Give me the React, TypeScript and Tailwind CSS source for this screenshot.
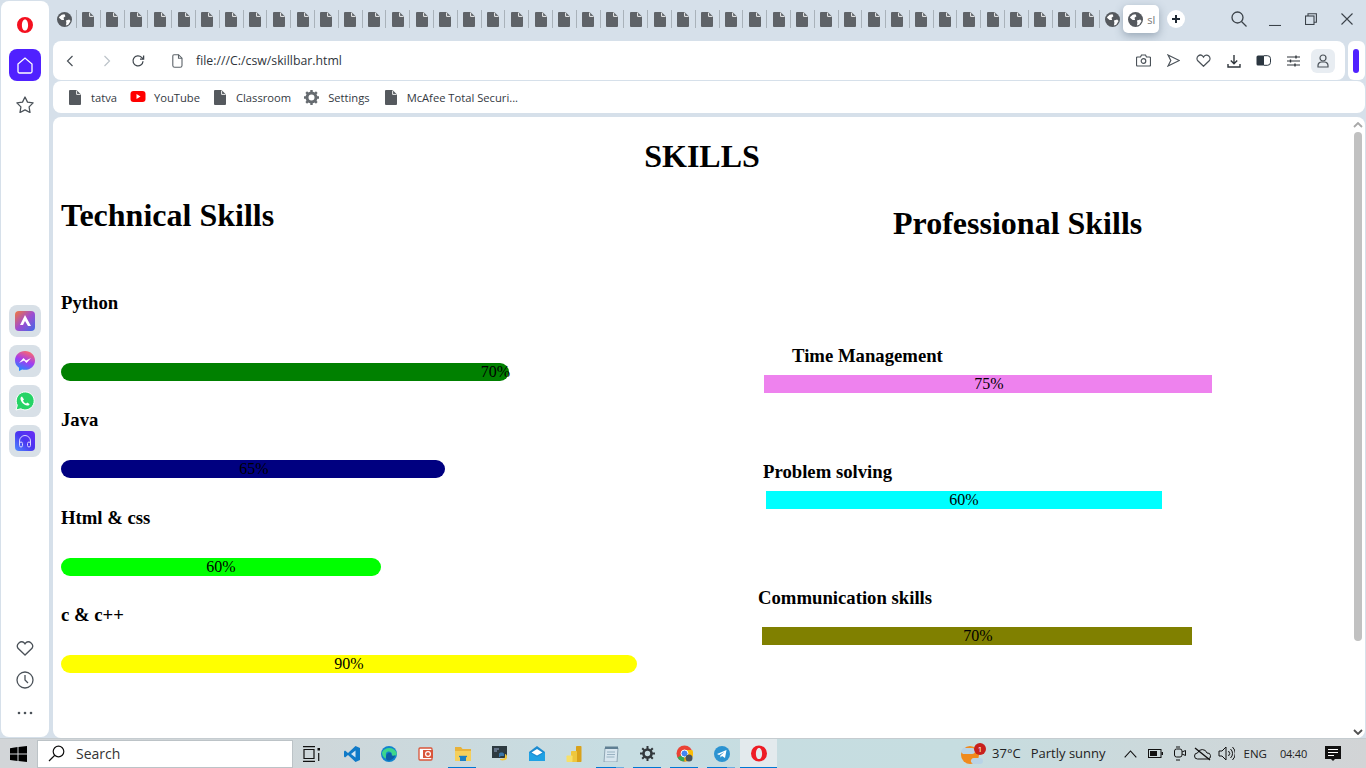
import React from "react";

const UI = { fontFamily: '"Open Sans", "Noto Sans", sans-serif' };
const SERIF = { fontFamily: '"Liberation Serif", serif' };

function FileIcon({ w = 12, h = 15, color = "#5f6368" }: { w?: number; h?: number; color?: string }) {
  return (
    <svg width={w} height={h} viewBox="0 0 12 15" className="shrink-0">
      <path d="M1 0h6.500L12 4.500V14a1 1 0 0 1-1 1H1a1 1 0 0 1-1-1V1a1 1 0 0 1 1-1z" fill={color} />
      <path d="M7.600 0.600V4.400H11.500" fill="none" stroke="#fff" strokeWidth="0.900" />
    </svg>
  );
}

function Globe({ size = 15 }: { size?: number }) {
  return (
    <svg width={size} height={size} viewBox="0 0 16 16" className="shrink-0">
      <circle cx="8" cy="8" r="8" fill="#55595e" />
      <path d="M2 5.500 5 3 8 2.500 9 4.500 7 6 7.500 8.500 5 8.500 3 7z" fill="#fff" />
      <path d="M9.500 9 13 8 14.500 9.500 12 13.500 9.500 14.500 10 11.500z" fill="#fff" />
    </svg>
  );
}

function OperaLogo({ w = 16, h = 16, color = "#f4101f" }: { w?: number; h?: number; color?: string }) {
  return (
    <svg width={w} height={h} viewBox="0 0 16 16">
      <path fillRule="evenodd" d="M8 0a8 8 0 1 1 0 16A8 8 0 0 1 8 0zm0 2.400c-1.900 0-3.100 2.500-3.100 5.600s1.200 5.600 3.100 5.600 3.100-2.500 3.100-5.600S9.900 2.400 8 2.400z" fill={color} />
    </svg>
  );
}

function Tabs() {
  return (
    <div className="h-[40px] flex items-start">
      <div className="flex items-center h-[24px] mt-[7px]">
        <div className="w-[24px] h-[18px] flex items-center justify-center border-r border-[#a9b2ba]"><Globe /></div>
        {Array.from({ length: 43 }).map((_, i) => (
          <div key={i} className="w-[23.810px] h-[18px] flex items-center justify-center border-r border-[#a9b2ba]">
            <FileIcon />
          </div>
        ))}
        <div className="w-[24px] flex items-center justify-center"><Globe /></div>
      </div>
      <div className="ml-[-1px] mt-[5px] w-[36px] h-[28px] bg-white rounded-[5px] shadow-[0_3px_8px_rgba(80,100,120,0.45)] flex items-center pl-[5px] overflow-hidden">
        <Globe />
        <span style={UI} className="text-[11px] text-[#777] ml-[4px] leading-none">sl</span>
      </div>
      <div className="ml-[8px] mt-[10px] w-[18px] h-[18px] bg-white rounded-full flex items-center justify-center">
        <svg width="10" height="10" viewBox="0 0 10 10"><path d="M5 1v8M1 5h8" stroke="#1f2933" strokeWidth="2" /></svg>
      </div>
      <div className="flex items-center mt-[10px] ml-[45px] text-[#3b4249]">
        <svg width="18" height="18" viewBox="0 0 18 18" fill="none" stroke="#3b4249" strokeWidth="1.300"><circle cx="7.500" cy="7.500" r="5.500" /><path d="M11.500 11.500 16.500 16.500" /></svg>
        <svg className="ml-[21px] mt-[2px]" width="12" height="12" viewBox="0 0 12 12"><path d="M0 11.500h12" stroke="#3b4249" strokeWidth="1.100" /></svg>
        <svg className="ml-[24px]" width="12" height="12" viewBox="0 0 12 12" fill="none" stroke="#3b4249" strokeWidth="1.100"><rect x="0.500" y="3" width="8.500" height="8.500" /><path d="M3 3V0.800h8.400v8.400H9" /></svg>
        <svg className="ml-[24px]" width="12" height="12" viewBox="0 0 12 12" fill="none" stroke="#3b4249" strokeWidth="1.100"><path d="M0.500 0.500 11.500 11.500M11.500 0.500 0.500 11.500" /></svg>
      </div>
    </div>
  );
}

function AddressBar() {
  const s = { fill: "none", stroke: "#4b5259", strokeWidth: 1.2 };
  return (
    <div className="h-[40px] flex gap-[3px]">
      <div className="w-[1292px] h-[39px] bg-white rounded-[8px] flex items-center">
        <svg className="ml-[12px]" width="10" height="12" viewBox="0 0 10 12" {...s}><path d="M7.500 1 2.500 6l5 5" /></svg>
        <svg className="ml-[27px]" width="10" height="12" viewBox="0 0 10 12" fill="none" stroke="#bcc3c9" strokeWidth="1.200"><path d="M2.500 1l5 5-5 5" /></svg>
        <svg className="ml-[19px]" width="14" height="14" viewBox="0 0 14 14" fill="none" stroke="#3f464d" strokeWidth="1.300"><path d="M12 7.200A5 5 0 1 1 10.600 3.400L12.300 5" /><path d="M12.600 1.600V5.200H9" /></svg>
        <svg className="ml-[27px]" width="11" height="14" viewBox="0 0 11 14" fill="none" stroke="#5c6369" strokeWidth="1.100"><path d="M2 .7h4.500L10 4.200V11.500a1.800 1.800 0 0 1-1.800 1.800H2.700A1.900 1.900 0 0 1 .8 11.400V2A1.300 1.300 0 0 1 2 .7z" /><path d="M6.500.7V4.200H10" /></svg>
        <span style={UI} className="ml-[13px] mt-[2px] text-[12.300px] text-[#2f353b] leading-none">file:///C:/csw/skillbar.html</span>
        <div className="ml-auto flex items-center">
          <svg width="15" height="13" viewBox="0 0 15 13" {...s}><path d="M1.500 3h3l1-2h4l1 2h3a1 1 0 0 1 1 1v7a1 1 0 0 1-1 1h-12a1 1 0 0 1-1-1V4a1 1 0 0 1 1-1z" /><circle cx="7.500" cy="7" r="2.300" /></svg>
          <svg className="ml-[16px]" width="13" height="13" viewBox="0 0 13 13" {...s}><path d="M1 1 12.300 6.500 1 12 3.800 6.500z" /></svg>
          <svg className="ml-[16px]" width="15" height="13" viewBox="0 0 15 13" {...s}><path d="M7.500 12.300 1.800 6.800A3.400 3.400 0 0 1 7 2.400l.5.700.5-.7a3.400 3.400 0 0 1 5.200 4.400z" /></svg>
          <svg className="ml-[16px]" width="14" height="14" viewBox="0 0 14 14" fill="none" stroke="#2f353b" strokeWidth="1.400"><path d="M7 1v8.500M3.800 6.500 7 9.700l3.200-3.200M1 10v3h12v-3" /></svg>
          <svg className="ml-[15px]" width="15" height="11" viewBox="0 0 15 11"><path d="M2 .5h6v10H2a1.500 1.500 0 0 1-1.500-1.500V2A1.500 1.500 0 0 1 2 .5z" fill="#2b3640" /><path d="M8 .7h3.500a3 3 0 0 1 3 3v3.600a3 3 0 0 1-3 3H8" fill="none" stroke="#2b3640" strokeWidth="1" /></svg>
          <svg className="ml-[16px]" width="13" height="12" viewBox="0 0 13 12" fill="none" stroke="#2f353b" strokeWidth="1.100"><path d="M0 2h13M0 6h13M0 10h13" /><path d="M9 .6v2.800M3.500 4.600v2.800M8 8.600v2.800" strokeWidth="1.400" /></svg>
          <div className="ml-[11px] mr-[10px] w-[24px] h-[24px] rounded-[6px] bg-[#e8edf2] flex items-center justify-center">
            <svg width="12" height="14" viewBox="0 0 12 14" {...s}><circle cx="6" cy="4" r="3" /><path d="M1 13v-1.500A3.500 3.500 0 0 1 4.500 8h3A3.500 3.500 0 0 1 11 11.500V13z" /></svg>
          </div>
        </div>
      </div>
      <div className="w-[17px] h-[39px] bg-white rounded-[6px] flex items-center">
        <div className="ml-[5px] w-[6px] h-[24px] rounded-[3px] bg-[#5021ff]" />
      </div>
    </div>
  );
}

function Bookmark({ icon, label, gap, after }: { icon: React.ReactNode; label: string; gap: number; after: number }) {
  return (
    <div className="flex items-center" style={{ marginRight: after }}>
      {icon}
      <span style={{ ...UI, marginLeft: gap }} className="mt-[2px] text-[11.200px] leading-none text-[#33393f] whitespace-nowrap">{label}</span>
    </div>
  );
}

function Bookmarks() {
  return (
    <div className="h-[32px] w-[1312px] bg-white rounded-[8px] flex items-center pl-[16px]">
      <Bookmark gap={10} after={13} icon={<FileIcon color="#55595e" />} label="tatva" />
      <Bookmark gap={8} after={14} icon={
        <svg width="16" height="11" viewBox="0 0 15 11"><rect width="15" height="11" rx="3" fill="#f00" /><path d="M6 3v5l4-2.500z" fill="#fff" /></svg>
      } label="YouTube" />
      <Bookmark gap={10} after={13} icon={<FileIcon color="#55595e" />} label="Classroom" />
      <Bookmark gap={9} after={15} icon={
        <svg width="15" height="15" viewBox="0 0 15 15"><circle cx="7.500" cy="7.500" r="4.500" fill="none" stroke="#666b70" strokeWidth="3" /><path d="M7.500 0v3M7.500 12v3M0 7.500h3M12 7.500h3M2.200 2.200l2 2M10.800 10.800l2 2M2.200 12.800l2-2M10.800 4.200l2-2" stroke="#666b70" strokeWidth="2.400" /></svg>
      } label="Settings" />
      <Bookmark gap={10} after={0} icon={<FileIcon color="#55595e" />} label="McAfee Total Securi..." />
    </div>
  );
}

function Bar({ w, color, label, align = "center", rounded = false, ml = 0, nudge = false }: { w: number; color: string; label: string; align?: "center" | "right"; rounded?: boolean; ml?: number; nudge?: boolean }) {
  return (
    <div
      style={{ width: w, marginLeft: ml, backgroundColor: color }}
      className={`h-[18px] leading-[18px] text-[16px] text-black ${rounded ? "rounded-[9px]" : ""} ${align === "right" ? "text-right" : "text-center"} ${nudge && align === "center" ? "pl-[2px]" : ""}`}
    >
      <span className={nudge && align === "right" ? "mr-[-1px]" : ""}>{label}</span>
    </div>
  );
}

function Page() {
  return (
    <div className="flex-1 flex bg-white rounded-[8px] overflow-hidden w-[1312px] mt-[4px]">
      <div style={SERIF} className="w-[1298px] text-black">
        <h1 className="text-[32px] leading-[37px] font-bold text-center mt-[21px]">SKILLS</h1>
        <div className="flex">
          <div className="w-[697px] pl-[8px]">
            <h2 className="text-[32px] leading-[37px] font-bold mt-[22px]">Technical Skills</h2>
            <h3 className="text-[18.720px] leading-[21px] font-bold mt-[58px]">Python</h3>
            <div className="mt-[50px]"><Bar w={448} color="#008000" label="70%" align="right" rounded nudge /></div>
            <h3 className="text-[18.720px] leading-[21px] font-bold mt-[28px]">Java</h3>
            <div className="mt-[30px]"><Bar w={384} color="#000080" label="65%" rounded nudge /></div>
            <h3 className="text-[18.720px] leading-[21px] font-bold mt-[29px]">Html &amp; css</h3>
            <div className="mt-[30px]"><Bar w={320} color="#00ff00" label="60%" rounded /></div>
            <h3 className="text-[18.720px] leading-[21px] font-bold mt-[28px]">c &amp; c++</h3>
            <div className="mt-[30px]"><Bar w={576} color="#ffff00" label="90%" rounded /></div>
          </div>
          <div className="flex-1">
            <h2 className="text-[32px] leading-[37px] font-bold mt-[30px] ml-[143px]">Professional Skills</h2>
            <h3 className="text-[18.720px] leading-[21px] font-bold mt-[103px] ml-[42px]">Time Management</h3>
            <div className="mt-[9px]"><Bar w={448} color="#ee82ee" label="75%" ml={14} nudge /></div>
            <h3 className="text-[18.720px] leading-[21px] font-bold mt-[68px] ml-[13px]">Problem solving</h3>
            <div className="mt-[9px]"><Bar w={396} color="#00ffff" label="60%" ml={16} /></div>
            <h3 className="text-[18.720px] leading-[21px] font-bold mt-[78px] ml-[8px]">Communication skills</h3>
            <div className="mt-[19px]"><Bar w={430} color="#808000" label="70%" ml={12} nudge /></div>
          </div>
        </div>
      </div>
      <div className="w-[14px] flex flex-col items-center">
        <svg className="mt-[5px]" width="10" height="6" viewBox="0 0 10 6" fill="none" stroke="#a8a8a8" strokeWidth="1.800"><path d="M1 5 5 1l4 4" /></svg>
        <div className="w-[8px] h-[509px] mt-[4px] rounded-[4px] bg-[#c1c1c1]" />
        <svg className="mt-auto mb-[3px]" width="10" height="6" viewBox="0 0 10 6" fill="none" stroke="#505050" strokeWidth="1.800"><path d="M1 1l4 4 4-4" /></svg>
      </div>
    </div>
  );
}

function SideTile({ children }: { children: React.ReactNode }) {
  return <div className="w-[32px] h-[32px] rounded-[8px] bg-[#d8e0e7] flex items-center justify-center">{children}</div>;
}

function Sidebar() {
  return (
    <div className="w-[48px] ml-[1px] mt-[1px] h-[736px] bg-white rounded-[8px] flex flex-col items-center shrink-0">
      <div className="mt-[16px] h-[16px]"><OperaLogo /></div>
      <div className="mt-[16px] w-[32px] h-[32px] rounded-[8px] bg-[#5021ff] flex items-center justify-center">
        <svg width="16" height="17" viewBox="0 0 16 17" fill="none" stroke="#fff" strokeWidth="1.300"><path d="M1 7 8 1l7 6v7.500a1.500 1.500 0 0 1-1.500 1.500h-11A1.500 1.500 0 0 1 1 14.500z" /></svg>
      </div>
      <svg className="mt-[15px]" width="18" height="17" viewBox="0 0 18 17" fill="none" stroke="#4b5259" strokeWidth="1.300"><path d="M9 1l2.500 5.100 5.600.8-4 4 .9 5.600L9 13.900 4 16.500l.9-5.600-4-4 5.600-.8z" strokeLinejoin="round" /></svg>
      <div className="mt-[192px] flex flex-col gap-[8px]">
        <SideTile>
          <svg width="20" height="20" viewBox="0 0 20 20">
            <defs><linearGradient id="a1" x1="0" y1="0" x2="1" y2="1"><stop offset="0" stopColor="#f27a3c" /><stop offset=".5" stopColor="#a04ccf" /><stop offset="1" stopColor="#3f6be8" /></linearGradient></defs>
            <rect width="20" height="20" rx="4" fill="url(#a1)" />
            <path d="M10 4 5 14h3l2-4 3 5h3z" fill="#fff" />
          </svg>
        </SideTile>
        <SideTile>
          <svg width="20" height="20" viewBox="0 0 20 20">
            <defs><linearGradient id="a2" x1="0.300" y1="1" x2="0.700" y2="0"><stop offset="0" stopColor="#1d8cff" /><stop offset=".5" stopColor="#a23cf0" /><stop offset="1" stopColor="#ff6a68" /></linearGradient></defs>
            <path d="M10 0c5.600 0 10 4 10 9.400s-4.400 9.400-10 9.400c-1 0-2-.100-2.900-.400L4 20v-3.300C1.500 15 0 12.400 0 9.400 0 4 4.400 0 10 0z" fill="url(#a2)" />
            <path d="M4 12l4.500-5 2.500 2.500L16 7l-4.500 5L9 9.500z" fill="#fff" />
          </svg>
        </SideTile>
        <SideTile>
          <svg width="20" height="20" viewBox="0 0 20 20">
            <path d="M1 19l1.300-4.700A9 9 0 1 1 5.800 17.800z" fill="#25d366" stroke="#fff" strokeWidth="1" />
            <path d="M7 5.500c-.8 0-1.600 1-1.500 2.300.2 3 3.500 6.500 6.700 6.800 1.300.1 2.300-.8 2.300-1.700l-2.300-1.300-1 1c-1.300-.4-2.800-1.900-3.200-3.200l1-1z" fill="#fff" />
          </svg>
        </SideTile>
        <SideTile>
          <svg width="20" height="20" viewBox="0 0 20 20">
            <defs><linearGradient id="a3" x1="0" y1="1" x2="1" y2="0"><stop offset="0" stopColor="#4d8cff" /><stop offset=".5" stopColor="#4a35f0" /><stop offset="1" stopColor="#6a2cf5" /></linearGradient></defs>
            <rect width="20" height="20" rx="4" fill="url(#a3)" />
            <path d="M4.500 13v-3a5.500 5.500 0 0 1 11 0v3" fill="none" stroke="#d9d4ff" strokeWidth="1" />
            <rect x="4.500" y="11" width="3" height="5" rx="1.500" fill="none" stroke="#d9d4ff" strokeWidth="1" />
            <rect x="12.500" y="11" width="3" height="5" rx="1.500" fill="none" stroke="#d9d4ff" strokeWidth="1" />
          </svg>
        </SideTile>
      </div>
      <svg className="mt-auto" width="18" height="16" viewBox="0 0 18 16" fill="none" stroke="#4b5259" strokeWidth="1.300"><path d="M9 15 2 8.300A4.200 4.200 0 0 1 8.400 3L9 3.800 9.600 3A4.200 4.200 0 0 1 16 8.300z" /></svg>
      <svg className="mt-[15px]" width="18" height="18" viewBox="0 0 18 18" fill="none" stroke="#4b5259" strokeWidth="1.300"><circle cx="9" cy="9" r="8" /><path d="M9 4v5l3 3" /></svg>
      <svg className="mt-[22px] mb-[22px]" width="16" height="4" viewBox="0 0 16 4" fill="#4b5259"><circle cx="2" cy="2" r="1.300" /><circle cx="8" cy="2" r="1.300" /><circle cx="14" cy="2" r="1.300" /></svg>
    </div>
  );
}

function TaskIcon({ children, line, active, split }: { children: React.ReactNode; line?: boolean; active?: boolean; split?: boolean }) {
  return (
    <div className={`w-[37px] h-[30px] flex items-center justify-center relative shrink-0 ${active ? "bg-[#e3eaed]" : ""}`}>
      {children}
      {line && <div className={`absolute bottom-0 h-[2px] bg-[#0078d4] ${active ? "left-0 right-0" : "left-[4px] right-[5px]"}`} />}
      {split && <div className="absolute bottom-0 h-[2px] right-[5px] w-[8px] bg-[#6aaee0]" />}
    </div>
  );
}

function Taskbar() {
  return (
    <div className="h-[30px] flex items-center bg-[linear-gradient(90deg,#d2d5d8_0%,#cfd6d9_20%,#c7dde2_45%,#c6dde0_70%,#d2d4d6_100%)] border-t border-[#c5ccd0]">
      <div className="w-[37px] flex justify-center">
        <svg width="17" height="16" viewBox="0 0 17 16" fill="#000"><path d="M0 2.200 7.500 1v6.500H0zM8.500.9 17 0v7.500H8.500zM0 8.500h7.500V15L0 13.900zM8.500 8.500H17V16l-8.500-1.100z" /></svg>
      </div>
      <div className="w-[256px] h-[28px] bg-white flex items-center border border-[#bcc3c7]">
        <svg className="ml-[10px]" width="17" height="17" viewBox="0 0 17 17" fill="none" stroke="#111" strokeWidth="1.200"><circle cx="10.500" cy="6.500" r="5.300" /><path d="M6.800 10.300 1 16" /></svg>
        <span style={UI} className="ml-[11px] text-[14px] leading-none text-[#333]">Search</span>
      </div>
      <div className="flex items-center">
        <TaskIcon>
          <svg width="17" height="16" viewBox="0 0 17 16" fill="none" stroke="#111" strokeWidth="1.200"><path d="M0 .6h12M0 15.400h12M1 3.500h10v9H1z" /><rect x="14.500" y="2" width="2.500" height="2.500" fill="#111" stroke="none" /><path d="M15.700 7v8" /></svg>
        </TaskIcon>
        <div className="w-[3px]" />
        <TaskIcon>
          <svg width="16" height="16" viewBox="0 0 16 16"><path d="M11.500 0 16 2v12l-4.500 2L4 9l-3 2.500L0 10.500V5.500L1 4.500 4 7z" fill="#0f7ac8" /><path d="M11.500 4.500v7L7 8z" fill="#cfe5f5" /></svg>
        </TaskIcon>
        <TaskIcon>
          <svg width="16" height="16" viewBox="0 0 16 16"><circle cx="8" cy="8" r="8" fill="#1183ce" /><path d="M1 6.500C3 1 13 0 15.800 7c.4 2.500-2.500 4-5.300 3 1.500-3-1-5-3.500-4.500C4.500 6 4 10 6.500 13 3.500 12.500 1 10 1 6.500z" fill="#3dd68c" /><path d="M6 8c1.500-2 4.500-1.500 4.500.5 0 1.500 2.500 1.500 4 .5-1 3-4 6-8 5.500C4.500 13.500 4.500 10 6 8z" fill="#0c5fa8" /></svg>
        </TaskIcon>
        <TaskIcon>
          <svg width="16" height="16" viewBox="0 0 16 16"><rect x="1" y="2" width="13" height="12" rx="1" fill="#fff" stroke="#d9553a" strokeWidth="1.300" /><rect x="5" y="4" width="10" height="8" fill="#d9553a" /><circle cx="10" cy="8" r="2.400" fill="none" stroke="#fff" strokeWidth="1.200" /></svg>
        </TaskIcon>
        <TaskIcon line>
          <svg width="16" height="15" viewBox="0 0 16 15"><path d="M0 1h6l1.500 2H16v3H0z" fill="#e8b23a" /><path d="M0 5h16v10H0z" fill="#f5cf5b" /><path d="M5 15v-4h6v4z" fill="#1b7fc4" /><path d="M4 10.500h8" stroke="#1b7fc4" strokeWidth="1.400" /></svg>
        </TaskIcon>
        <TaskIcon>
          <svg width="16" height="15" viewBox="0 0 16 15"><rect width="15" height="12" fill="#2d3a40" /><path d="M2 3h5M2 5h3" stroke="#9ac" strokeWidth="1" /><path d="M7 8c0-2 5-2 5 0v2H9c-1 0-1 1-1 1H7z" fill="#3b78ab" /><path d="M13 8v3c0 2-5 2-5 2v1c3 1 5 0 5 0 1 0 2-1 2-3s-1-3-2-3z" fill="#f4c93e" /></svg>
        </TaskIcon>
        <TaskIcon>
          <svg width="16" height="15" viewBox="0 0 16 15"><path d="M0 6 8 0l8 6v9H0z" fill="#1b8bd0" /><path d="M2.500 6.500 8 3l5.500 3.500L8 9.500z" fill="#fff" /><path d="M0 6l8 5 8-5v9H0z" fill="#1fa1e4" /></svg>
        </TaskIcon>
        <TaskIcon>
          <svg width="16" height="16" viewBox="0 0 16 16"><rect x="10" y="0" width="5.500" height="16" rx=".8" fill="#d9a21b" /><rect x="5" y="5" width="6" height="11" rx=".8" fill="#eec73d" /><rect x="0.500" y="9.500" width="6" height="6.500" rx=".8" fill="#f7e06a" /></svg>
        </TaskIcon>
        <TaskIcon line split>
          <svg width="16" height="16" viewBox="0 0 16 16"><path d="M2 2h13l-1 14H1z" fill="#d8e6ef" stroke="#7f97a6" strokeWidth=".800" /><path d="M2 .500h13v2.500H2z" fill="#5f7f93" /><path d="M4 6h8M4 8.500h8M3.500 11h8" stroke="#89a5b6" strokeWidth=".800" /></svg>
        </TaskIcon>
        <TaskIcon line>
          <svg width="15" height="15" viewBox="0 0 15 15"><circle cx="7.500" cy="7.500" r="4" fill="none" stroke="#32383c" strokeWidth="2.600" /><path d="M7.500 0v3M7.500 12v3M0 7.500h3M12 7.500h3M2.200 2.200l2 2M10.800 10.800l2 2M2.200 12.800l2-2M10.800 4.200l2-2" stroke="#32383c" strokeWidth="2" /></svg>
        </TaskIcon>
        <TaskIcon line>
          <svg width="17" height="17" viewBox="0 0 17 17"><circle cx="8.500" cy="8.500" r="8" fill="#ea4335" /><path d="M8.500 8.500 1.500 12.500A8 8 0 0 0 8.500 16.500z" fill="#34a853" /><path d="M8.500 5h7.800A8 8 0 0 1 8.500 16.500z" fill="#fbbc05" /><circle cx="8.500" cy="8.500" r="3.500" fill="#4285f4" stroke="#fff" strokeWidth="1" /><circle cx="13" cy="13" r="3.500" fill="#4b5259" /></svg>
        </TaskIcon>
        <TaskIcon line split>
          <svg width="16" height="16" viewBox="0 0 16 16"><circle cx="8" cy="8" r="8" fill="#2b93d1" /><path d="M3 8 12.500 4 11 12 8 10l-1.500 1.500L6.300 9.500 10.500 6 5 9z" fill="#fff" /></svg>
        </TaskIcon>
        <TaskIcon line active>
          <OperaLogo w={16} h={17} color="#ee1c25" />
        </TaskIcon>
      </div>
      <div className="ml-auto flex items-center text-[#222] leading-none" style={UI}>
        <div className="relative w-[24px] h-[22px] mr-[8px]">
          <svg width="24" height="22" viewBox="0 0 24 22"><circle cx="10" cy="12" r="9" fill="#f08a1d" /><path d="M1 9a4 4 0 0 1 5-4h6a3 3 0 0 1 0 6H3z" fill="#b9d3e6" /><path d="M11 19a3 3 0 0 1 3-4h6a3 3 0 0 1 0 6H13z" fill="#b9d3e6" /></svg>
          <div className="absolute right-[-2px] top-0 w-[12px] h-[12px] rounded-full bg-[#c8201c] text-white text-[8px] flex items-center justify-center">1</div>
        </div>
        <span className="text-[13px] mr-[10px]">37°C</span>
        <span className="text-[13px] mr-[18px]">Partly sunny</span>
        <svg width="13" height="8" viewBox="0 0 13 8" fill="none" stroke="#111" strokeWidth="1.100"><path d="M.7 7.300 6.500 1l5.800 6.300" /></svg>
        <svg className="ml-[11px]" width="15" height="9" viewBox="0 0 15 9" fill="none" stroke="#111" strokeWidth="1"><rect x=".5" y=".5" width="12.500" height="8" /><rect x="2" y="2" width="7" height="5" fill="#111" stroke="none" /><rect x="13.500" y="3" width="1.500" height="3" fill="#111" stroke="none" /></svg>
        <svg className="ml-[11px]" width="12" height="15" viewBox="0 0 12 15" fill="none" stroke="#111" strokeWidth="1"><rect x=".5" y="3" width="7.500" height="8" rx="2" /><path d="M8 6l3.500-1.500v5L8 8M2 1h4M2 14h4" /></svg>
        <svg className="ml-[8px]" width="17" height="14" viewBox="0 0 17 14" fill="none" stroke="#111" strokeWidth="1"><path d="M3.500 12a3 3 0 0 1 0-6 5 5 0 0 1 9.500 0 3 3 0 0 1 1 6z" /><path d="M1 1l15 12" strokeWidth="1.400" /></svg>
        <svg className="ml-[7px]" width="17" height="15" viewBox="0 0 17 15" fill="none" stroke="#111" strokeWidth="1"><path d="M1 5h3l4-4v13l-4-4H1zM10.500 5a3.500 3.500 0 0 1 0 5M12.500 3a6 6 0 0 1 0 9M14.500 1a9 9 0 0 1 0 13" /></svg>
        <span className="text-[11.500px] ml-[9px]">ENG</span>
        <span className="text-[11px] tracking-[-0.2px] ml-[13px]">04:40</span>
        <svg className="ml-[18px] mr-[25px]" width="16" height="16" viewBox="0 0 16 16"><path d="M0 0h16v13h-6l-2 2-2-2H0z" fill="#111" /><path d="M3 3.500h10M3 6.500h10M3 9.500h6" stroke="#fff" strokeWidth="1" /></svg>
      </div>
    </div>
  );
}

export default function App() {
  return (
    <div className="w-[1366px] h-[768px] overflow-hidden flex flex-col bg-[#d6e0ea]">
      <div className="h-[738px] flex">
        <Sidebar />
        <div className="flex flex-col ml-[4px] flex-1 min-w-0">
          <Tabs />
          <div className="mt-[1px]"><AddressBar /></div>
          <Bookmarks />
          <Page />
        </div>
      </div>
      <Taskbar />
    </div>
  );
}
